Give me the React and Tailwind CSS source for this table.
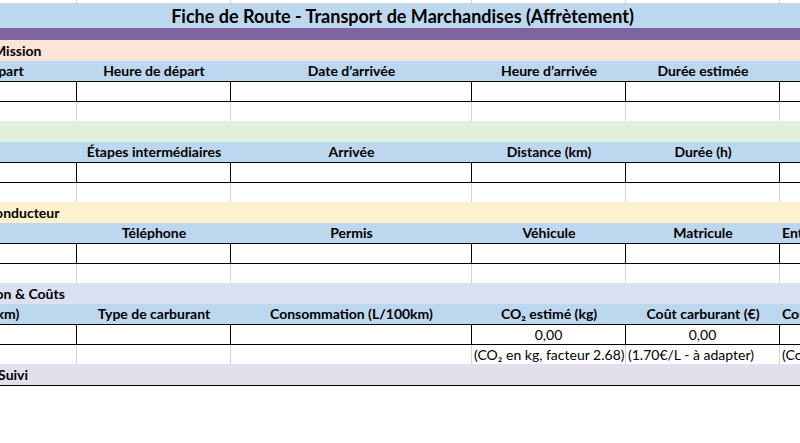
import React from 'react';

const colW = ['w-[200px]', 'w-[154px]', 'w-[241px]', 'w-[154px]', 'w-[154px]', 'w-[148px]'];

const blocks = [
  {
    label: '1. Informations Mission',
    bg: 'bg-[#fce4d6]',
    labelPad: 'pl-[18px]',
    headers: ['Date de départ', 'Heure de départ', 'Date d’arrivée', 'Heure d’arrivée', 'Durée estimée', ''],
  },
  {
    label: '2. Itinéraire',
    bg: 'bg-[#e2efda]',
    labelPad: 'pl-[2px]',
    headers: ['Départ', 'Étapes intermédiaires', 'Arrivée', 'Distance (km)', 'Durée (h)', ''],
  },
  {
    label: '3. Informations Conducteur',
    bg: 'bg-[#fff2cc]',
    labelPad: 'pl-[11px]',
    headers: ['Nom', 'Téléphone', 'Permis', 'Véhicule', 'Matricule', 'Entreprise'],
  },
  {
    label: '4. Consommation & Coûts',
    bg: 'bg-[#d9e1f2]',
    labelPad: 'pl-[25px]',
    headers: ['Distance (km)', 'Type de carburant', 'Consommation (L/100km)', 'CO₂ estimé (kg)', 'Coût carburant (€)', 'Coût total (€)'],
    values: ['', '', '', '0,00', '0,00', ''],
    notes: ['', '', '', '(CO₂ en kg, facteur 2.68)', '(1.70€/L - à adapter)', '(Coût total estimé)'],
  },
];

function GridStrip() {
  return (
    <div className="flex h-[4px] border-b border-[#d4d4d4]">
      {colW.map((w, i) => (
        <div key={i} className={`${w} shrink-0 border-r border-[#d4d4d4]`} />
      ))}
    </div>
  );
}

function SectionRow({ label, bg, labelPad }) {
  return (
    <div className={`flex h-[21px] items-end ${bg} ${labelPad} pb-[1px] text-[14px] font-bold leading-[18px] whitespace-nowrap`}>
      {label}
    </div>
  );
}

function HeaderRow({ headers }) {
  return (
    <div className="flex h-[20px] bg-[#bdd7ee] text-[14px] font-bold leading-[18px]">
      {headers.map((h, i) => (
        <div
          key={i}
          className={`${colW[i]} shrink-0 flex items-end pb-[1px] whitespace-nowrap overflow-hidden ${
            i === 5 ? 'justify-start pl-[2px]' : 'justify-center'
          }`}
        >
          {h}
        </div>
      ))}
    </div>
  );
}

function DataRow({ values = [] }) {
  return (
    <div className="flex h-[21px] border-y border-black text-[14px] leading-[18px]">
      {colW.map((w, i) => (
        <div key={i} className={`${w} shrink-0 border-r border-black flex items-end justify-center`}>
          {values[i]}
        </div>
      ))}
    </div>
  );
}

function EmptyRow({ notes = [] }) {
  return (
    <div className="flex h-[19px] text-[14px] leading-[18px]">
      {colW.map((w, i) => (
        <div key={i} className={`${w} shrink-0 border-r border-[#d4d4d4] flex items-end pl-[2px] whitespace-nowrap overflow-hidden`}>
          {notes[i]}
        </div>
      ))}
    </div>
  );
}

export default function App() {
  return (
    <div className="w-[800px] h-[443px] overflow-hidden bg-white text-black font-['Lato',sans-serif]">
      <div className="ml-[-123px] w-[1051px] flex flex-col">
        <GridStrip />
        <div className="flex h-[24px] items-center justify-center bg-[#bdd7ee] text-[18px] font-bold">
          Fiche de Route - Transport de Marchandises (Affrètement)
        </div>
        <div className="h-[12px] bg-[#8064a2]" />
        {blocks.map((b, i) => (
          <React.Fragment key={i}>
            <SectionRow label={b.label} bg={b.bg} labelPad={b.labelPad} />
            <HeaderRow headers={b.headers} />
            <DataRow values={b.values} />
            <EmptyRow notes={b.notes} />
          </React.Fragment>
        ))}
        <div className="flex h-[22px] items-end bg-[#e4dfec] border-b border-black pl-[6px] pb-[1px] text-[14px] font-bold leading-[18px] whitespace-nowrap">
          5. Observations &amp; Suivi
        </div>
      </div>
    </div>
  );
}
